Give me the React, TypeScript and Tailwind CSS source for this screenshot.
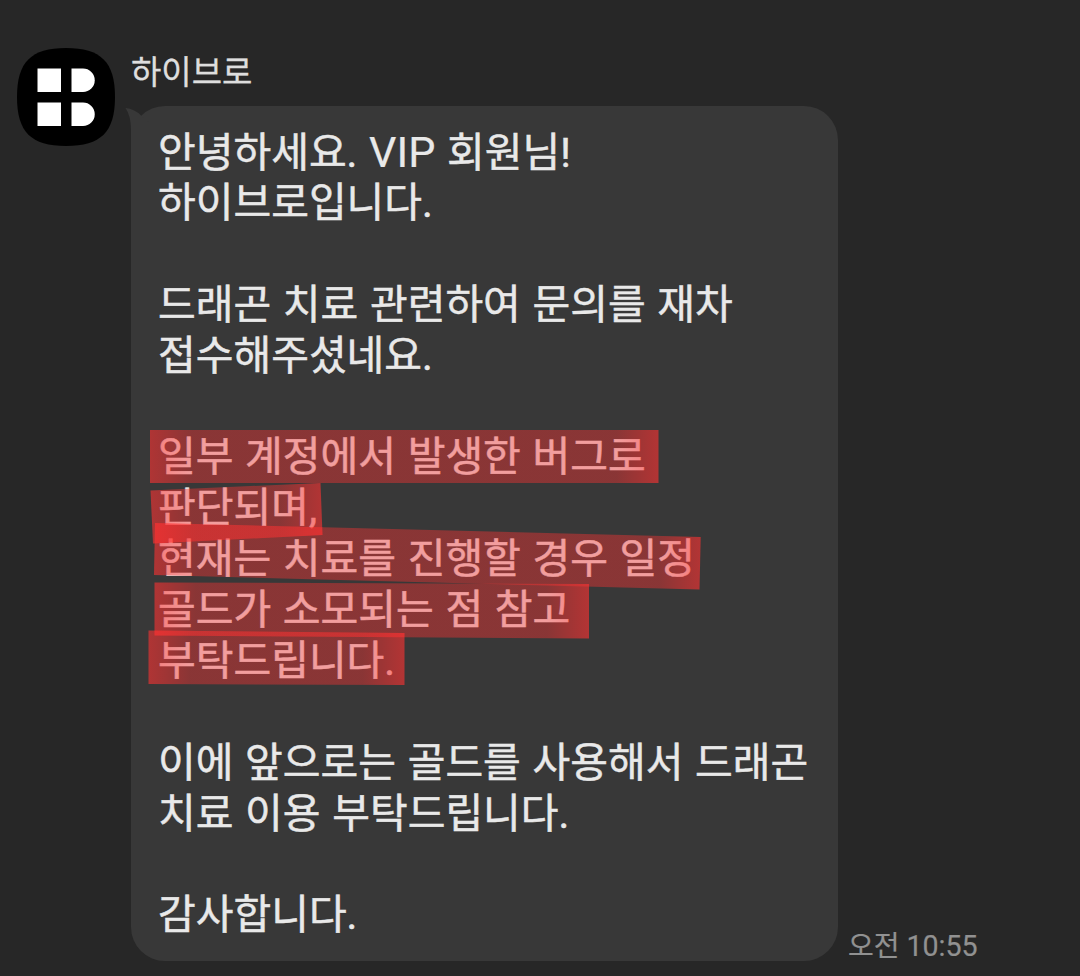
const PARAGRAPHS = [
  { marked: false, lines: ["안녕하세요. VIP 회원님!", "하이브로입니다."] },
  { marked: false, lines: ["드래곤 치료 관련하여 문의를 재차", "접수해주셨네요."] },
  { marked: true, lines: ["일부 계정에서 발생한 버그로", "판단되며,", "현재는 치료를 진행할 경우 일정", "골드가 소모되는 점 참고", "부탁드립니다."] },
  { marked: false, lines: ["이에 앞으로는 골드를 사용해서 드래곤", "치료 이용 부탁드립니다."] },
  { marked: false, lines: ["감사합니다."] },
];

// marker strokes, relative to the bubble's top left corner
const STROKES = [
  { id: "s1", x1: 19, x2: 527.5, points: "19,324 527.5,324 527.5,377 19,377" },
  { id: "s2", x1: 19, x2: 191.5, points: "19.5,384.5 189.5,377 191.5,429 22,437.5" },
  { id: "s3", x1: 23, x2: 570, points: "24,417 569.7,431 568.5,483.5 23,469" },
  { id: "s4", x1: 23.5, x2: 458, points: "23.5,476.5 458,478 458,532.5 23.5,529.5" },
  { id: "s5", x1: 17.5, x2: 273.5, points: "17.5,524.5 273.5,527 273.5,579 17.5,578" },
];

// where two strokes cross the ink builds up
const OVERLAPS = [
  "24,417 191.3,421.3 191.5,429 23.5,437.4",
  "23.5,524.6 273.5,527 273.5,531.2 23.5,529.5",
];

export default function App() {
  return (
    <main className="h-[976px] w-[1080px] overflow-hidden bg-[#272727] pl-[17px] pt-[48px] font-['Roboto','Noto_Sans_CJK_KR',sans-serif]">
      <div className="flex items-start">
        <Avatar />
        <div className="ml-4 flex flex-col">
          <p className="h-[58px] whitespace-nowrap pt-px text-[33px] leading-[48px] text-[#dedede] [-webkit-text-stroke:0.3px]">하이브로</p>
          <div className="flex items-end">
            <Bubble />
            <time className="ml-[10px] whitespace-nowrap text-[28px] leading-[28px] text-[#919191] [-webkit-text-stroke:0.2px]">
              오전 <span className="text-[28.6px]">10:55</span>
            </time>
          </div>
        </div>
      </div>
    </main>
  );
}

function Avatar() {
  return (
    <svg className="size-[98px] shrink-0" viewBox="0 0 98 98">
      <path d="M49 0C84 0 98 14 98 49S84 98 49 98 0 84 0 49 14 0 49 0Z" fill="#000" />
      <g fill="#fff">
        <path d="M20.5 20.5h23.5v23.5h-23.5z" />
        <path d="M20.5 54.5h23.5v23.5h-23.5z" />
        <path d="M54.5 20.5h11.5a11.75 11.75 0 0 1 0 23.5h-11.5z" />
        <path d="M54.5 54.5h11.5a11.75 11.75 0 0 1 0 23.5h-11.5z" />
      </g>
    </svg>
  );
}

function Bubble() {
  return (
    <div className="relative h-[855px] w-[707px] rounded-[34px] bg-[#383838] pl-[27px] pt-[21px]">
      <svg className="absolute left-[-6px] top-0 h-[40px] w-[36px]" viewBox="0 0 36 40">
        <path d="M0.5 2Q10 3 16 9.6L34 24V40H6V24Q6 10 0.5 2Z" fill="#383838" />
      </svg>
      <div className="relative flex flex-col gap-[50.9px] text-[41px] leading-[50.9px] text-[#e9e9e9] [-webkit-text-stroke:0.5px] [word-spacing:1.5px]">
        {PARAGRAPHS.map((p) => (
          <div key={p.lines[0]}>
            {p.lines.map((line) => (
              <p key={line} className="h-[50.9px] whitespace-nowrap"><Line text={line} /></p>
            ))}
          </div>
        ))}
      </div>
      <Marker />
    </div>
  );
}

// latin capitals run slightly larger than the hangul around them
function Line({ text }: { text: string }) {
  return text.split(/([A-Z]+)/).map((part, i) => (
    i % 2 ? <span key={i} className="text-[43px] [-webkit-text-stroke:0.2px]">{part}</span> : part
  ));
}

// translucent red, denser where each stroke starts and ends
function Marker() {
  return (
    <svg className="pointer-events-none absolute left-0 top-0 h-[855px] w-[707px]" viewBox="0 0 707 855">
      {STROKES.map((s) => (
        <g key={s.id}>
          <linearGradient id={s.id} gradientUnits="userSpaceOnUse" x1={s.x1} x2={s.x2} y1="0" y2="0">
            <stop offset="0" stopColor="#ff3232" stopOpacity="0.6" />
            <stop offset={42 / (s.x2 - s.x1)} stopColor="#ff3232" stopOpacity="0.41" />
            <stop offset={1 - 42 / (s.x2 - s.x1)} stopColor="#ff3232" stopOpacity="0.41" />
            <stop offset="1" stopColor="#ff3232" stopOpacity="0.62" />
          </linearGradient>
          <polygon points={s.points} fill={`url(#${s.id})`} />
        </g>
      ))}
      {OVERLAPS.map((points) => (
        <polygon key={points} points={points} fill="#ff3232" fillOpacity="0.22" />
      ))}
    </svg>
  );
}
